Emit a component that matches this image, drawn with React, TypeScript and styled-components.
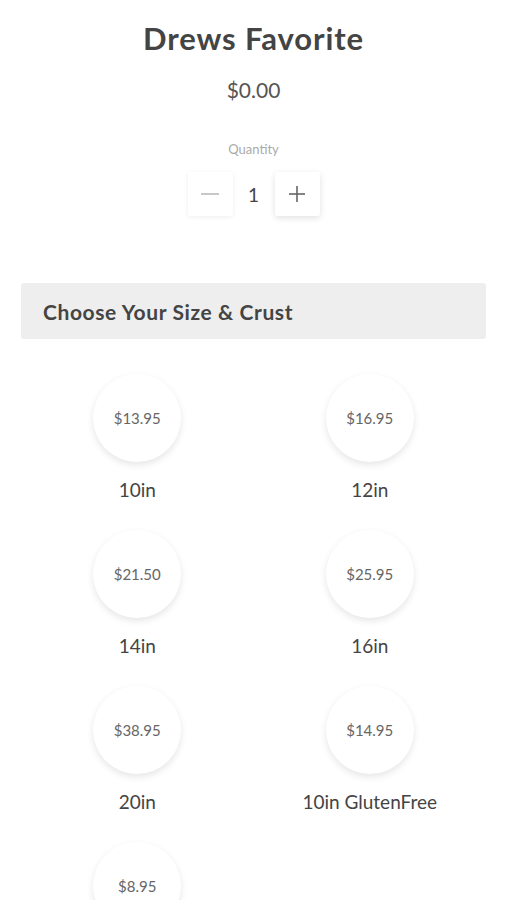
import React, { useState } from "react";
import styled, { createGlobalStyle } from "styled-components";

const Global = createGlobalStyle`
  html, body { margin: 0; padding: 0; background: #fff; }
  body { font-family: "Lato", "Liberation Sans", sans-serif; color: #444; }
`;

const Page = styled.div`
  width: 507px;
  display: flex;
  flex-direction: column;
  align-items: center;
  padding-top: 20px;
`;

const Title = styled.h1`
  margin: 0;
  font-size: 31px;
  line-height: 36px;
  font-weight: 700;
  color: #444;
  letter-spacing: 0.9px;
`;

const Price = styled.div`
  margin-top: 22px;
  font-size: 21px;
  line-height: 24px;
  color: #555;
`;

const QtyLabel = styled.div`
  margin-top: 39px;
  font-size: 13px;
  line-height: 16px;
  color: #aaa;
`;

const Stepper = styled.div`
  margin-top: 15px;
  display: flex;
  align-items: center;
`;

const StepBtn = styled.button<{ $raised?: boolean }>`
  width: 45px;
  height: 44px;
  border: none;
  background: #fff;
  border-radius: 2px;
  box-shadow: ${(p) =>
    p.$raised ? "0 2px 6px rgba(0,0,0,0.12)" : "0 1px 5px rgba(0,0,0,0.07)"};
  display: flex;
  align-items: center;
  justify-content: center;
  padding: 0;
  cursor: pointer;
`;

const QtyValue = styled.div`
  width: 42px;
  text-align: center;
  font-size: 19px;
  color: #444;
`;

const SectionHeader = styled.div`
  margin-top: 67px;
  align-self: stretch;
  margin-left: 21px;
  margin-right: 21px;
  height: 56px;
  background: #eeeeee;
  border-radius: 3px;
  display: flex;
  align-items: center;
  padding-left: 22px;
  font-size: 21px;
  font-weight: 700;
  letter-spacing: 0.6px;
  color: #444;
`;

const Grid = styled.div`
  align-self: stretch;
  margin: 35px 21px 0;
  display: grid;
  grid-template-columns: 1fr 1fr;
  row-gap: 28px;
`;

const Option = styled.div`
  display: flex;
  flex-direction: column;
  align-items: center;
`;

const Circle = styled.div`
  width: 88px;
  height: 88px;
  border-radius: 50%;
  background: #fff;
  box-shadow: 0 3px 7px rgba(0, 0, 0, 0.1);
  display: flex;
  align-items: center;
  justify-content: center;
  font-size: 15px;
  color: #666;
`;

const Label = styled.div`
  margin-top: 16px;
  font-size: 19px;
  line-height: 24px;
  color: #444;
`;

const options = [
  { price: "$13.95", label: "10in" },
  { price: "$16.95", label: "12in" },
  { price: "$21.50", label: "14in" },
  { price: "$25.95", label: "16in" },
  { price: "$38.95", label: "20in" },
  { price: "$14.95", label: "10in GlutenFree" },
  { price: "$8.95", label: "" },
];

export default function App() {
  const [qty, setQty] = useState(1);
  return (
    <>
      <Global />
      <Page>
        <Title>Drews Favorite</Title>
        <Price>$0.00</Price>
        <QtyLabel>Quantity</QtyLabel>
        <Stepper>
          <StepBtn onClick={() => setQty(Math.max(1, qty - 1))}>
            <svg width="20" height="20" viewBox="0 0 20 20">
              <line x1="1" y1="10" x2="19" y2="10" stroke="#bbb" strokeWidth="1.6" />
            </svg>
          </StepBtn>
          <QtyValue>{qty}</QtyValue>
          <StepBtn $raised onClick={() => setQty(qty + 1)}>
            <svg width="20" height="20" viewBox="0 0 20 20">
              <line x1="2" y1="10" x2="18" y2="10" stroke="#666" strokeWidth="1.6" />
              <line x1="10" y1="2" x2="10" y2="18" stroke="#666" strokeWidth="1.6" />
            </svg>
          </StepBtn>
        </Stepper>
        <SectionHeader>Choose Your Size &amp; Crust</SectionHeader>
        <Grid>
          {options.map((o, i) => (
            <Option key={i}>
              <Circle>{o.price}</Circle>
              {o.label && <Label>{o.label}</Label>}
            </Option>
          ))}
        </Grid>
      </Page>
    </>
  );
}
